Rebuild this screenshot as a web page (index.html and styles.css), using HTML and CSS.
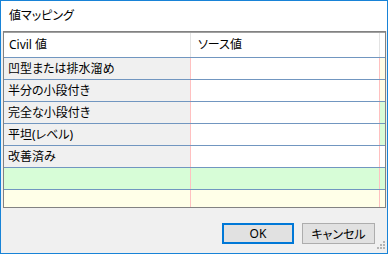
FILE: index.html
```html
<!DOCTYPE html>
<html lang="ja">
<head>
    <meta charset="UTF-8">
    <title>値マッピング</title>
<link rel="stylesheet" href="styles.css">
</head>
<body>
    <div class="window">
        <div class="titlebar">値マッピング</div>
        <div class="client">
            <div class="grid">
                <div class="row head">
                    <span class="c1">Civil 値</span>
                    <span class="c2">ソース値</span>
                    <span class="c3"></span>
                </div>
                <div class="row">
                    <span class="c1">凹型または排水溜め</span>
                    <span class="c2"></span>
                    <span class="c3 yel"></span>
                </div>
                <div class="row">
                    <span class="c1">半分の小段付き</span>
                    <span class="c2"></span>
                    <span class="c3 yel"></span>
                </div>
                <div class="row">
                    <span class="c1">完全な小段付き</span>
                    <span class="c2"></span>
                    <span class="c3 grn"></span>
                </div>
                <div class="row">
                    <span class="c1">平坦(レベル)</span>
                    <span class="c2"></span>
                    <span class="c3 grn"></span>
                </div>
                <div class="row">
                    <span class="c1">改善済み</span>
                    <span class="c2"></span>
                    <span class="c3"></span>
                </div>
                <div class="row new">
                    <span class="c1"></span>
                    <span class="c2"></span>
                    <span class="c3"></span>
                </div>
                <div class="row last">
                    <span class="c1"></span>
                    <span class="c2"></span>
                    <span class="c3"></span>
                </div>
            </div>
            <div class="buttons">
                <button class="btn ok">OK</button>
                <button class="btn">キャンセル</button>
            </div>
            <svg class="grip" width="11" height="11" viewBox="0 0 11 11">
                <g fill="#b4b4b4">
                    <rect x="8" y="0" width="2" height="2"/>
                    <rect x="5" y="3" width="2" height="2"/>
                    <rect x="8" y="3" width="2" height="2"/>
                    <rect x="2" y="6" width="2" height="2"/>
                    <rect x="5" y="6" width="2" height="2"/>
                    <rect x="8" y="6" width="2" height="2"/>
                </g>
            </svg>
        </div>
    </div>
</body>
</html>
```

FILE: styles.css
```css
*{
    margin: 0;
    padding: 0;
    box-sizing: border-box;
}
body{
    font-family: "Noto Sans", "Noto Sans CJK JP", sans-serif;
    font-size: 12px;
    color: #000;
    background: #fff;
}
.window{
    width: 388px;
    height: 254px;
    border: 1px solid #1883d7;
    display: flex;
    flex-direction: column;
    background: #f0f0f0;
}
.titlebar{
    height: 30px;
    background: #fff;
    padding-left: 8px;
    line-height: 30px;
    font-feature-settings: "palt";
}
.client{
    flex: 1;
    position: relative;
    display: flex;
    flex-direction: column;
}
.grid{
    margin-left: 2px;
    width: 383px;
    height: 177px;
    border: 1px solid #828282;
    overflow: hidden;
    background: #fff;
}
.row{
    display: flex;
    height: 22px;
    border-bottom: 1px solid #7196c0;
}
.row span{
    display: block;
    line-height: 21px;
    font-feature-settings: "palt";
}
.c1{
    width: 187px;
    padding-left: 4px;
    background: #f0f0f0;
    border-right: 1px solid #ffc0c0;
}
.c2{
    width: 189px;
    border-right: 1px solid #ffc0c0;
}
.c3{
    width: 5px;
}
.yel{
    background: #fffde6;
}
.grn{
    background: #d8fcd8;
}
.row.head{
    height: 26px;
    border-top: 1px solid #a0a0a0;
}
.row.head span{
    line-height: 24px;
    background: #fff;
    border-right-color: #e3e3e3;
}
.row.head .c1{
    padding-left: 5px;
}
.row.head .c2{
    padding-left: 7px;
}
.row.new span{
    background: #d7fdd7;
}
.row.last span{
    background: #ffffe8;
}
.buttons{
    display: flex;
    justify-content: flex-end;
    gap: 8px;
    padding: 15px 12px 0 0;
}
.btn{
    height: 21px;
    width: 73px;
    background: #e1e1e1;
    border: 1px solid #adadad;
    font-family: "Noto Sans", "Noto Sans CJK JP", sans-serif;
    font-size: 12px;
    color: #000;
    font-feature-settings: "palt";
}
.btn.ok{
    width: 72px;
    border: 2px solid #0078d7;
}
.grip{
    position: absolute;
    right: 1px;
    bottom: 1px;
}
```
